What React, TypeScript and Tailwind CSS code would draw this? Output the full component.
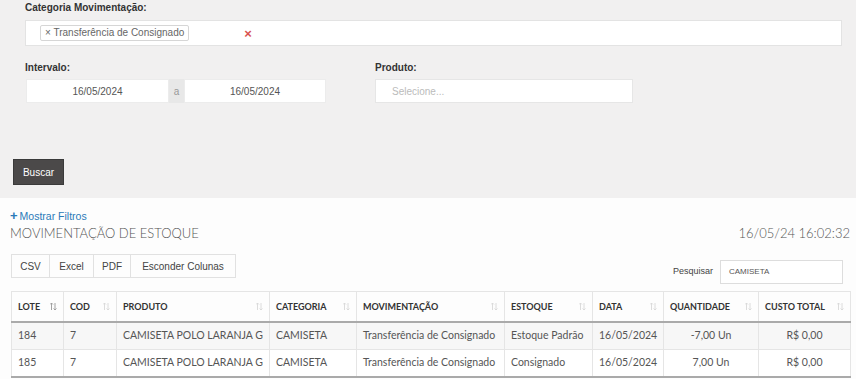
import React from 'react';

const cols = [
  { label: 'LOTE', w: 52, sorted: true },
  { label: 'COD', w: 53 },
  { label: 'PRODUTO', w: 153 },
  { label: 'CATEGORIA', w: 87 },
  { label: 'MOVIMENTAÇÃO', w: 148 },
  { label: 'ESTOQUE', w: 88 },
  { label: 'DATA', w: 71 },
  { label: 'QUANTIDADE', w: 95 },
  { label: 'CUSTO TOTAL', w: 92 },
];

const rows = [
  ['184', '7', 'CAMISETA POLO LARANJA G', 'CAMISETA', 'Transferência de Consignado', 'Estoque Padrão', '16/05/2024', '-7,00 Un', 'R$ 0,00'],
  ['185', '7', 'CAMISETA POLO LARANJA G', 'CAMISETA', 'Transferência de Consignado', 'Consignado', '16/05/2024', '7,00 Un', 'R$ 0,00'],
];

function SortIcon({ active }: { active?: boolean }) {
  return (
    <svg width="7" height="9" viewBox="0 0 7 9" className="shrink-0">
      <path d="M1.5 1v7M0 2.5L1.5 1 3 2.5" stroke={active ? '#999' : '#d8d8d8'} strokeWidth="0.9" fill="none" />
      <path d="M5 8V1M3.5 6.5L5 8l1.5-1.5" stroke={active ? '#999' : '#d8d8d8'} strokeWidth="0.9" fill="none" />
    </svg>
  );
}

export default function App() {
  return (
    <div className="w-[856px] h-[379px] overflow-hidden bg-[#fdfdfd] font-['Liberation_Sans',Arial,sans-serif]">
      {/* Filters */}
      <div className="bg-[#f1f0f0] pt-[1px] pb-[13px] px-[13px]">
        <div className="px-[12px]">
          <div className="h-[14px] text-[10px] leading-[14px] font-bold text-[#333]">Categoria Movimentação:</div>
          <div className="mt-[5px] h-[26px] w-[817px] bg-white border border-[#e3e3e3] flex items-center pl-[14px]">
            <span className="h-[16px] px-[4px] border border-[#d6d6d6] rounded-[2px] text-[10px] leading-[14px] text-[#666] bg-white">
              × Transferência de Consignado
            </span>
            <span className="ml-[55px] text-[#d9534f] text-[13px] font-bold leading-none">×</span>
          </div>

          <div className="mt-[15px] flex">
            <div>
              <div className="h-[14px] text-[10px] leading-[14px] font-bold text-[#333]">Intervalo:</div>
              <div className="mt-[4px] ml-[1px] flex h-[24px] text-[10px] text-[#555]">
                <div className="w-[143px] bg-white border border-[#ececec] flex items-center justify-center">16/05/2024</div>
                <div className="w-[15px] bg-[#e8e8e8] flex items-center justify-center text-[#999]">a</div>
                <div className="w-[142px] bg-white border border-[#ececec] flex items-center justify-center">16/05/2024</div>
              </div>
            </div>
            <div className="ml-[49px]">
              <div className="h-[14px] text-[10px] leading-[14px] font-bold text-[#333]">Produto:</div>
              <div className="mt-[4px] h-[24px] w-[258px] bg-white border border-[#e6e6e6] flex items-center pl-[16px] text-[10px] text-[#bbb]">
                Selecione...
              </div>
            </div>
          </div>
        </div>

        <button className="mt-[56px] h-[26px] w-[51px] bg-[#4b4949] text-white text-[10px] border border-[#3a3a3a]">Buscar</button>
      </div>

      {/* Report */}
      <div className="px-[10px] font-['Lato',sans-serif]">
        <div className="mt-[12px] text-[10.5px] leading-[12px] text-[#2a7ab8] flex items-center font-['Liberation_Sans',Arial,sans-serif]">
          <span className="font-bold text-[13px] leading-[10px] mr-[2px]">+</span>Mostrar Filtros
        </div>
        <div className="flex justify-between items-center mt-[2px] text-[13px] leading-[18px] font-light text-[#555]">
          <span>MOVIMENTAÇÃO DE ESTOQUE</span>
          <span className="mr-[-4px]">16/05/24 16:02:32</span>
        </div>

        <div className="flex justify-between mt-[12px]">
          <div className="flex h-[24px] ml-[1px] border border-[#e1e1e1] text-[10px] text-[#444] font-['Liberation_Sans',Arial,sans-serif]">
            <div className="w-[38px] flex items-center justify-center border-r border-[#e1e1e1]">CSV</div>
            <div className="w-[44px] flex items-center justify-center border-r border-[#e1e1e1]">Excel</div>
            <div className="w-[37px] flex items-center justify-center border-r border-[#e1e1e1]">PDF</div>
            <div className="w-[104px] flex items-center justify-center">Esconder Colunas</div>
          </div>
          <div className="flex items-center mt-[6px] mr-[3px] text-[9px] text-[#444] font-['Liberation_Sans',Arial,sans-serif]">
            <span className="mr-[7px]">Pesquisar</span>
            <div className="w-[123px] h-[24px] border border-[#ddd] bg-white flex items-center pl-[8px] text-[8px] text-[#555]">CAMISETA</div>
          </div>
        </div>

        <table className="mt-[7px] ml-[1px] border-collapse table-fixed w-[839px] text-[#555]">
          <thead>
            <tr className="h-[30px]">
              {cols.map((c) => (
                <th
                  key={c.label}
                  style={{ width: c.w }}
                  className="border border-[#e5e5e5] border-b-2 border-b-[#aaa] px-[6px] text-left text-[9px] font-bold text-[#333]"
                >
                  <div className="flex items-center justify-between">
                    <span>{c.label}</span>
                    <SortIcon active={c.sorted} />
                  </div>
                </th>
              ))}
            </tr>
          </thead>
          <tbody>
            {rows.map((r, i) => (
              <tr key={i} className={i === 0 ? 'h-[28px] bg-[#f7f7f7]' : 'h-[27px] bg-white'}>
                {r.map((cell, j) => (
                  <td
                    key={j}
                    className={`border border-[#e5e5e5] px-[6px] text-[10.5px] whitespace-nowrap overflow-hidden ${
                      j >= 7 ? 'text-center' : 'text-left'
                    } ${i === 1 ? 'border-b-2 border-b-[#aaa]' : ''}`}
                  >
                    {cell}
                  </td>
                ))}
              </tr>
            ))}
          </tbody>
        </table>
      </div>
    </div>
  );
}
